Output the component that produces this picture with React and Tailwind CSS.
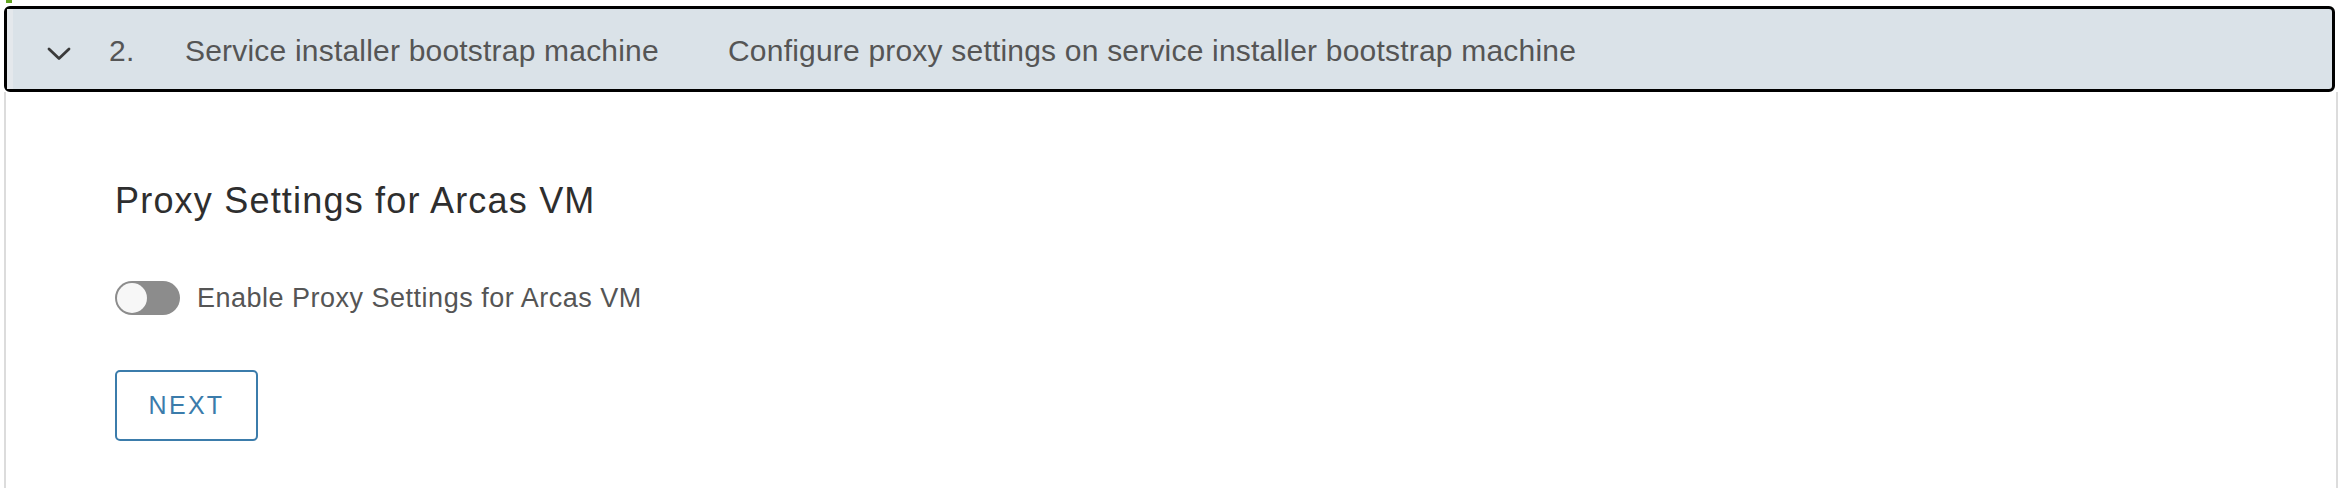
export default function App() {
    return (
        <div
            className="h-[488px] w-[2338px] overflow-hidden bg-white"
            style={{ fontFamily: '"Liberation Sans", Arial, sans-serif' }}
        >
            {/* 이전 단계 표시 */}
            <div className="h-[6px] pl-[6px]">
                <div className="h-[3px] w-[6px] bg-[#62a420]" />
            </div>

            {/* 단계 헤더 */}
            <div className="ml-[4px] flex h-[86px] w-[2331px] items-center rounded-[6px] border-[3px] border-black bg-[#dae2e8] text-[30px] tracking-[0.2px] text-[#555]">
                <div className="h-full w-[6px] self-stretch bg-[#e4e8ec]" />
                <svg
                    className="ml-[34px] mt-[9px] shrink-0"
                    width="24"
                    height="14"
                    viewBox="0 0 24 14"
                    fill="none"
                >
                    <polyline
                        points="2,2 12,11.5 22,2"
                        stroke="#3a3a3a"
                        strokeWidth="2.8"
                        strokeLinecap="round"
                        strokeLinejoin="round"
                    />
                </svg>
                <span className="ml-[38px] w-[76px] shrink-0 pt-[2px]">2.</span>
                <span className="w-[543px] shrink-0 pt-[2px]">Service installer bootstrap machine</span>
                <span className="pt-[2px]">Configure proxy settings on service installer bootstrap machine</span>
            </div>

            {/* 내용 */}
            <div className="ml-[4px] h-[396px] w-[2334px] border-x-2 border-[#dcdcdc] pl-[109px] pt-[91px]">
                <h2 className="text-[36px] leading-none tracking-[1.2px] text-[#2e2e2e]">
                    Proxy Settings for Arcas VM
                </h2>

                <div className="mt-[62px] flex h-[34px] items-center">
                    <div className="flex h-[34px] w-[65px] items-center rounded-full bg-[#8c8c8c] p-[2px]">
                        <div className="h-[30px] w-[30px] rounded-full bg-[#f7f7f7]" />
                    </div>
                    <span className="ml-[17px] text-[27px] tracking-[0.5px] text-[#555]">
                        Enable Proxy Settings for Arcas VM
                    </span>
                </div>

                <button className="mt-[55px] flex h-[71px] w-[143px] items-center justify-center rounded-[5px] border-2 border-[#3b7cab] bg-white text-[25px] tracking-[2.3px] text-[#3b7cab]">
                    NEXT
                </button>
            </div>
        </div>
    );
}
